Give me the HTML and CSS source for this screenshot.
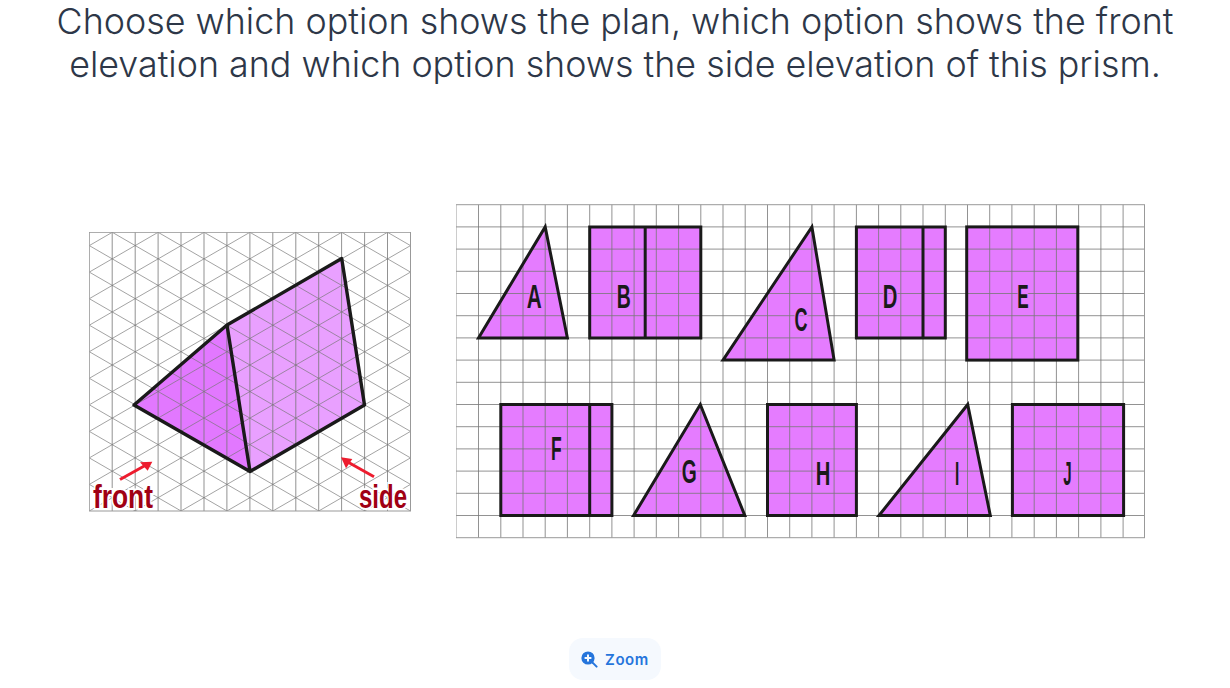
FILE: index.html
```html
<!DOCTYPE html>
<html lang="en">
<head>
  <meta charset="UTF-8">
  <title>Plan and elevations</title>
  <link rel="stylesheet" href="styles.css">
</head>
<body>
  <h1 class="question">Choose which option shows the plan, which option shows the front elevation and which option shows the side elevation of this prism.</h1>

  <div class="figures">
    <!-- prism on isometric paper -->
    <svg class="prism" width="335" height="290" viewBox="89 232 335 290">
      <defs>
        <clipPath id="paper">
          <rect x="89.3" y="232.3" width="321.2" height="278.7"/>
        </clipPath>
      </defs>
      <polygon class="face-light" points="227,325 341.7,258.5 364.5,405 250,471.5"/>
      <polygon class="face-dark" points="134,405 227,325 250,471.5"/>
      <g clip-path="url(#paper)">
        <path class="iso-line" d="M89.3 59.8L410.5 245.6M89.3 86.3L410.5 272.1M89.3 112.9L410.5 298.7M89.3 139.4L410.5 325.2M89.3 165.9L410.5 351.7M89.3 192.5L410.5 378.3M89.3 219L410.5 404.8M89.3 245.6L410.5 431.4M89.3 272.1L410.5 457.9M89.3 298.7L410.5 484.4M89.3 325.2L410.5 511M89.3 351.7L410.5 537.5M89.3 378.3L410.5 564M89.3 404.8L410.5 590.6M89.3 431.4L410.5 617.1M89.3 457.9L410.5 643.7M89.3 484.4L410.5 670.2"/>
        <path class="iso-line" d="M89.3 245.6L410.5 59.8M89.3 272.1L410.5 86.3M89.3 298.7L410.5 112.9M89.3 325.2L410.5 139.4M89.3 351.7L410.5 165.9M89.3 378.3L410.5 192.5M89.3 404.8L410.5 219M89.3 431.4L410.5 245.6M89.3 457.9L410.5 272.1M89.3 484.4L410.5 298.7M89.3 511L410.5 325.2M89.3 537.5L410.5 351.7M89.3 564L410.5 378.3M89.3 590.6L410.5 404.8M89.3 617.1L410.5 431.4M89.3 643.7L410.5 457.9M89.3 670.2L410.5 484.4"/>
      </g>
      <path class="grid-line" d="M112.2 232.3V511M135.2 232.3V511M158.1 232.3V511M181 232.3V511M204 232.3V511M226.9 232.3V511M249.9 232.3V511M272.8 232.3V511M295.8 232.3V511M318.7 232.3V511M341.6 232.3V511M364.6 232.3V511M387.5 232.3V511"/>
      <rect class="grid-frame" x="89.3" y="232.3" width="321.2" height="278.7"/>
      <path class="outline" d="M134 405L227 325L341.7 258.5L364.5 405L250 471.5ZM227 325L250 471.5"/>
      <path class="arrow-line" d="M120 479.5L146 465"/>
      <polygon class="arrow-head" points="140,462.3 152.3,461.7 147.7,470.7"/>
      <path class="arrow-line" d="M374 476.7L346 461"/>
      <polygon class="arrow-head" points="341,457.3 352.3,459 346,468.3"/>
      <text class="view-label" x="93" y="507.5" textLength="60" lengthAdjust="spacingAndGlyphs">front</text>
      <text class="view-label" x="359" y="507.5" textLength="48" lengthAdjust="spacingAndGlyphs">side</text>
    </svg>

    <!-- options A to J on square paper -->
    <svg class="options" width="690" height="335" viewBox="456 204 690 335">
      <g class="shape-fill">
        <polygon points="478.5,337.9 545.2,226.9 567.4,337.9"/>
        <rect x="589.7" y="226.9" width="111.1" height="111"/>
        <polygon points="723,360.1 811.9,226.9 834.1,360.1"/>
        <rect x="856.4" y="226.9" width="88.9" height="111"/>
        <rect x="966.7" y="226.9" width="111.1" height="133.2"/>
        <rect x="500.8" y="404.5" width="111.1" height="111"/>
        <polygon points="633.6,515.5 700.3,404.5 744.8,515.5"/>
        <rect x="767.5" y="404.5" width="88.9" height="111"/>
        <polygon points="879,515.5 967.7,404.5 990.3,515.5"/>
        <rect x="1012.4" y="404.5" width="111.2" height="111"/>
      </g>
      <path class="grid-line" d="M478.5 204.7V537.7M500.8 204.7V537.7M523 204.7V537.7M545.2 204.7V537.7M567.4 204.7V537.7M589.7 204.7V537.7M611.9 204.7V537.7M634.1 204.7V537.7M656.3 204.7V537.7M678.6 204.7V537.7M700.8 204.7V537.7M723 204.7V537.7M745.2 204.7V537.7M767.5 204.7V537.7M789.7 204.7V537.7M811.9 204.7V537.7M834.1 204.7V537.7M856.4 204.7V537.7M878.6 204.7V537.7M900.8 204.7V537.7M923 204.7V537.7M945.3 204.7V537.7M967.5 204.7V537.7M989.7 204.7V537.7M1011.9 204.7V537.7M1034.2 204.7V537.7M1056.4 204.7V537.7M1078.6 204.7V537.7M1100.9 204.7V537.7M1123.1 204.7V537.7"/>
      <path class="grid-line" d="M456 226.9H1144.5M456 249.1H1144.5M456 271.3H1144.5M456 293.5H1144.5M456 315.7H1144.5M456 337.9H1144.5M456 360.1H1144.5M456 382.3H1144.5M456 404.5H1144.5M456 426.7H1144.5M456 448.9H1144.5M456 471.1H1144.5M456 493.3H1144.5M456 515.5H1144.5"/>
      <rect class="grid-frame" x="456" y="204.7" width="688.5" height="333"/>
      <g class="shape-line">
        <polygon points="478.5,337.9 545.2,226.9 567.4,337.9"/>
        <path d="M589.7 226.9H700.8V337.9H589.7ZM645.2 226.9V337.9"/>
        <polygon points="723,360.1 811.9,226.9 834.1,360.1"/>
        <path d="M856.4 226.9H945.3V337.9H856.4ZM923 226.9V337.9"/>
        <rect x="966.7" y="226.9" width="111.1" height="133.2"/>
        <path d="M500.8 404.5H611.9V515.5H500.8ZM589.7 404.5V515.5"/>
        <polygon points="633.6,515.5 700.3,404.5 744.8,515.5"/>
        <rect x="767.5" y="404.5" width="88.9" height="111"/>
        <polygon points="879,515.5 967.7,404.5 990.3,515.5"/>
        <rect x="1012.4" y="404.5" width="111.2" height="111"/>
      </g>
      <g class="option-label">
        <text x="526.7" y="308" textLength="15" lengthAdjust="spacingAndGlyphs">A</text>
        <text x="616.7" y="308" textLength="14" lengthAdjust="spacingAndGlyphs">B</text>
        <text x="794.5" y="330.5" textLength="13" lengthAdjust="spacingAndGlyphs">C</text>
        <text x="882.7" y="308" textLength="14.6" lengthAdjust="spacingAndGlyphs">D</text>
        <text x="1017.3" y="308" textLength="11.4" lengthAdjust="spacingAndGlyphs">E</text>
        <text x="551" y="460" textLength="10.7" lengthAdjust="spacingAndGlyphs">F</text>
        <text x="681.7" y="483" textLength="15" lengthAdjust="spacingAndGlyphs">G</text>
        <text x="815.7" y="485" textLength="14.6" lengthAdjust="spacingAndGlyphs">H</text>
        <text x="955" y="485" textLength="4.2" lengthAdjust="spacingAndGlyphs">I</text>
        <text x="1063.3" y="485" textLength="8.4" lengthAdjust="spacingAndGlyphs">J</text>
      </g>
    </svg>
  </div>

  <div class="zoom-row">
    <button class="zoom-btn">
      <svg width="17" height="17" viewBox="0 0 17 17">
        <circle class="zoom-glass" cx="7" cy="7" r="6.6"/>
        <path class="zoom-plus" d="M7 3.6V10.4M3.6 7H10.4"/>
        <path class="zoom-handle" d="M11.6 11.6L15.6 15.6"/>
      </svg>
      Zoom
    </button>
  </div>
</body>
</html>
```

FILE: styles.css
```css
html, body {
  margin: 0;
  height: 688px;
  overflow: hidden;
  background-color: #fff;
}
body {
  font-family: 'Inter', 'Liberation Sans', sans-serif;
  color: #2d3748;
}
.question {
  margin: 0;
  padding: 0 50px;
  font-size: 35.85px;
  font-weight: 300;
  line-height: 43px;
  text-align: center;
}
.figures {
  display: flex;
  align-items: flex-start;
  gap: 32px;
  margin-top: 118px;
  padding-left: 89px;
}
.figures svg {
  display: block;
}
.prism {
  margin-top: 28px;
}
.grid-line {
  fill: none;
  stroke: #777;
  stroke-width: 1;
  stroke-opacity: 0.8;
}
.grid-frame {
  fill: none;
  stroke: #999;
  stroke-width: 1;
}
.iso-line {
  fill: none;
  stroke: #777;
  stroke-width: 0.8;
  stroke-opacity: 0.85;
}
.face-light {
  fill: #e9a0ff;
}
.face-dark {
  fill: #e278ff;
}
.outline {
  fill: none;
  stroke: #1a1a1a;
  stroke-width: 3.4;
  stroke-linejoin: round;
}
.arrow-line {
  fill: none;
  stroke: #ed1c2e;
  stroke-width: 3;
}
.arrow-head {
  fill: #ed1c2e;
}
.view-label {
  font-family: 'Liberation Sans Narrow', 'Liberation Sans', sans-serif;
  font-size: 34px;
  font-weight: 700;
  fill: #a00014;
  stroke: #fff;
  stroke-width: 4;
  paint-order: stroke;
}
.shape-fill {
  fill: #e57cff;
}
.shape-line {
  fill: none;
  stroke: #1a1a1a;
  stroke-width: 3;
}
.option-label {
  font-family: 'Liberation Sans Narrow', 'Liberation Sans', sans-serif;
  font-size: 34px;
  font-weight: 700;
  fill: #1a1a1a;
  stroke: #e57cff;
  stroke-width: 3;
  paint-order: stroke;
}
.zoom-row {
  display: flex;
  justify-content: center;
  margin-top: 99px;
}
.zoom-btn {
  display: flex;
  align-items: center;
  gap: 7px;
  width: 92px;
  height: 42px;
  padding: 0 0 0 12px;
  border: none;
  border-radius: 14px;
  background-color: #f5f9fe;
  color: #2575dc;
  font-family: 'Inter', 'Liberation Sans', sans-serif;
  font-size: 15px;
  font-weight: 600;
  letter-spacing: 0.6px;
}
.zoom-glass {
  fill: #2575dc;
}
.zoom-plus {
  fill: none;
  stroke: #f5f9fe;
  stroke-width: 2;
}
.zoom-handle {
  fill: none;
  stroke: #2575dc;
  stroke-width: 2;
  stroke-linecap: round;
}
```
